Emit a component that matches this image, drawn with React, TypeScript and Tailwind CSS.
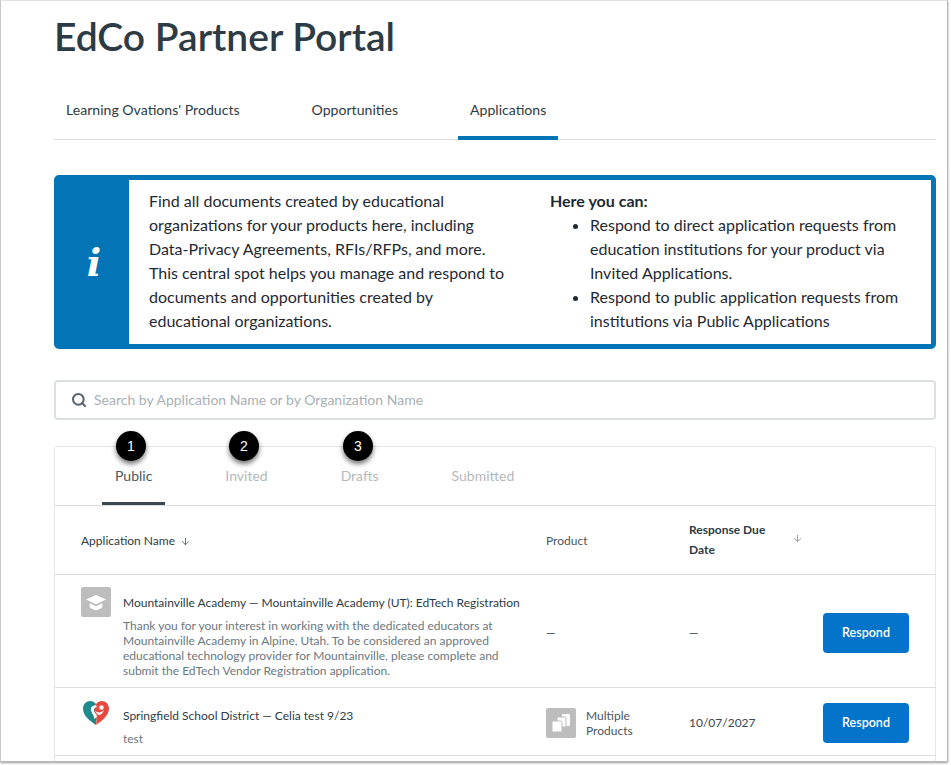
import { ArrowDown, Search } from 'lucide-react'

const pageTabs = [
  { label: "Learning Ovations' Products", active: false },
  { label: 'Opportunities', active: false },
  { label: 'Applications', active: true },
]

const listTabs = ['Public', 'Invited', 'Drafts', 'Submitted']

function CapIcon() {
  return (
    <div className="flex h-[30px] w-[30px] items-center justify-center rounded-[2px] bg-[#bdbdbd]">
      <svg width="20" height="17" viewBox="0 0 24 20" fill="#fff">
        <path d="M12 1 24 6.500 12 12 0 6.500z" />
        <path d="M4.500 11 12 14.400 19.500 11v5.200L12 19.500l-7.500-3.300z" />
      </svg>
    </div>
  )
}

function StackIcon() {
  return (
    <div className="flex h-[30px] w-[30px] items-center justify-center rounded-[2px] bg-[#bdbdbd]">
      <svg width="22" height="22" viewBox="0 0 22 22" fill="#fff">
        <rect x="12" y="2" width="8" height="12" rx="1" />
        <rect x="7" y="5" width="9" height="10" rx="1" stroke="#bdbdbd" strokeWidth="1" />
        <rect x="2" y="9" width="10" height="11" rx="1.500" stroke="#bdbdbd" strokeWidth="1" />
      </svg>
    </div>
  )
}

function HeartLogo() {
  return (
    <svg width="30" height="30" viewBox="0 0 30 30">
      <path d="M15 27C9 23 2 18 2 10.500 2 6 5.500 3 9 3c2.500 0 4.500 1 6 3-1 2-1 3.500 0 5.500 1 2.500 2 4 1 7-.5 3-1 6-1 8.500z" fill="#1f8a8c" />
      <path d="M15 27c5-3.500 13-9 13-16.500C28 6 24.500 3 21 3c-2.500 0-4.500 1-6 3 1 3-3 4-1 8 1.500 3 2 9 1 13z" fill="#e8493f" />
      <path d="M10 10c2-3 5-3 6-1-2 0-3 1-3 3 0 3 3 4 3 7l-3 2c1-4-4-6-3-11z" fill="#fff" />
      <circle cx="20.500" cy="9.500" r="2.200" fill="#fff" />
      <path d="M14 13c3 2 6 2 9-1-1 3-3 5-6 5z" fill="#fff" />
    </svg>
  )
}

function Marker({ n }: { n: number }) {
  return (
    <div className="flex h-[30px] w-[30px] items-center justify-center rounded-full bg-black font-['Liberation_Sans',sans-serif] text-[14px] text-white shadow-[0_3px_5px_rgba(0,0,0,0.55)]">
      {n}
    </div>
  )
}

function RespondButton() {
  return (
    <button className="h-10 w-[86px] rounded-[4px] bg-[#0374c9] pt-[1px] text-[12.500px] font-semibold text-white">
      Respond
    </button>
  )
}

export default function App() {
  return (
    <div className="h-[765px] w-[951px] overflow-hidden bg-white font-['Lato',sans-serif] text-[#2d3b45]">
      <div className="h-[762px] w-[948px] overflow-hidden border-t border-r border-b border-l border-t-[#e2e2e2] border-r-[#b9b9b9] border-b-[#b9b9b9] border-l-[#c8c8c8] pr-[11px] pl-[53px] shadow-[0_1px_2px_rgba(0,0,0,0.4)]">
        <h1 className="mt-3 text-[39px] leading-[46px] font-semibold">EdCo Partner Portal</h1>

        <div className="mt-[28px] flex h-[53px] gap-12 border-b border-[#dcdfe2]">
          {pageTabs.map(t => (
            <div
              key={t.label}
              className={`flex h-[53px] items-center border-b-4 px-3 pb-[3px] text-[14.100px] ${t.active ? 'border-[#0374b5]' : 'border-transparent'}`}
            >
              {t.label}
            </div>
          ))}
        </div>

        <div className="mt-[35px] flex h-[174px] overflow-hidden rounded-[5px] border-[5px] border-[#0374b5] bg-white text-black">
          <div className="flex w-[70px] items-center justify-center bg-[#0374b5] font-['DejaVu_Serif',serif] text-[38px] font-bold text-white italic">
            i
          </div>
          <div className="flex flex-1 pt-[9px] pl-5 text-[16px] leading-6 text-[#1f2933]">
            <p className="mr-[41px] w-[360px]">
              Find all documents created by educational organizations for your products here, including
              Data-Privacy Agreements, RFIs/RFPs, and more. This central spot helps you manage and respond to
              documents and opportunities created by educational organizations.
            </p>
            <div className="w-[360px]">
              <p className="font-bold">Here you can:</p>
              <ul className="list-disc pl-10">
                <li>Respond to direct application requests from education institutions for your product via Invited Applications.</li>
                <li>Respond to public application requests from institutions via Public Applications</li>
              </ul>
            </div>
          </div>
        </div>

        <div className="mt-[31px] flex h-[40px] items-center gap-[7px] rounded-[4px] border-2 border-[#dcdfe2] pb-[1px] pl-[15px] text-[14px] text-[#a9afb5]">
          <Search size={16} strokeWidth={3} className="text-[#56636d]" />
          <span>Search by Application Name or by Organization Name</span>
        </div>

        <div className="relative mt-[26px] h-[330px] rounded-t-[4px] border border-[#e3e5e8]">
          <div className="absolute top-[-16px] left-[61px]"><Marker n={1} /></div>
          <div className="absolute top-[-16px] left-[174px]"><Marker n={2} /></div>
          <div className="absolute top-[-16px] left-[288px]"><Marker n={3} /></div>

          <div className="flex h-[59px] gap-[47px] border-b border-[#dcdfe2] pl-[47px]">
            {listTabs.map((t, i) => (
              <div
                key={t}
                className={`flex h-[58px] items-center border-b-[3px] px-[13px] pt-[2px] text-[14px] ${i === 0 ? 'border-[#3b4650] text-[#4b5660]' : 'border-transparent text-[#b4b8bc]'}`}
              >
                {t}
              </div>
            ))}
          </div>

          <div className="grid h-[69px] grid-cols-[465px_143px_134px_1fr] items-center border-b border-[#dcdfe2] pt-[2px] pl-[26px] text-[12px]">
            <div className="flex items-center gap-[5px]">
              Application Name <ArrowDown size={11} className="text-[#56636d]" />
            </div>
            <div className="text-[#4b5660]">Product</div>
            <div className="relative -mt-[2px] w-[90px] leading-5 font-bold">
              Response Due Date
              <ArrowDown size={11} className="absolute top-[13px] left-[103px] text-[#8b9298]" />
            </div>
          </div>

          <div className="grid h-[113px] grid-cols-[42px_423px_143px_134px_1fr] items-center border-b border-[#dcdfe2] pt-1 pl-[26px] text-[12px]">
            <div className="mt-2 self-start"><CapIcon /></div>
            <div className="self-start pt-4">
              <p className="leading-[16px] whitespace-nowrap">Mountainville Academy — Mountainville Academy (UT): EdTech Registration</p>
              <p className="mt-[7px] w-[385px] leading-[15px] text-[#6b7780]">
                Thank you for your interest in working with the dedicated educators at Mountainville Academy in
                Alpine, Utah. To be considered an approved educational technology provider for Mountainville, please
                complete and submit the EdTech Vendor Registration application.
              </p>
            </div>
            <div>—</div>
            <div>—</div>
            <RespondButton />
          </div>

          <div className="grid h-[68px] grid-cols-[42px_423px_143px_134px_1fr] items-center border-b border-[#dcdfe2] pt-[2px] pl-[26px] text-[12px]">
            <div className="mb-[20px]"><HeartLogo /></div>
            <div className="self-start pt-[18px]">
              <p className="leading-[16px]">Springfield School District — Celia test 9/23</p>
              <p className="mt-[7px] leading-[15px] text-[#6b7780]">test</p>
            </div>
            <div className="flex items-center gap-[10px]">
              <StackIcon />
              <span className="w-[60px] leading-[15px] text-[#4b5660]">Multiple Products</span>
            </div>
            <div className="text-[#3b4650]">10/07/2027</div>
            <RespondButton />
          </div>
        </div>
      </div>
    </div>
  )
}
